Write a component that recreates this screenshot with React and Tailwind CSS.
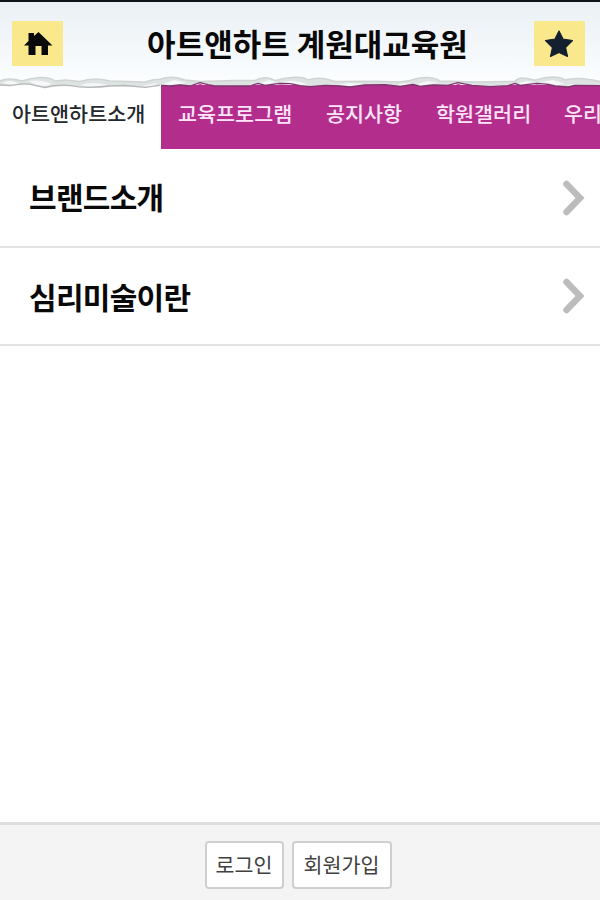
const tabs = [
  { label: '교육프로그램', width: 'w-[148px]' },
  { label: '공지사항', width: 'w-[110px]' },
  { label: '학원갤러리', width: 'w-[128px]' },
  { label: '우리', width: 'w-[148px]' },
];

function HomeIcon() {
  return (
    <svg width="30" height="26" viewBox="0 0 30 26" fill="#080b09">
      <path d="M1 14.500 5.500 10V2h5.500v3L15.500 1 29.500 14.500H25V24h-6.500v-9H12.500v9H5.500v-9.500Z" />
    </svg>
  );
}

function StarIcon() {
  return (
    <svg width="30" height="28" viewBox="0 0 30 28" fill="#142030" stroke="#142030" strokeWidth="1.2" strokeLinejoin="round">
      <path d="m14 1 4 8 9.500 1.500-7 7 2 9L14 22.500l-8.500 4 2-9-7-7L10 9Z" />
    </svg>
  );
}

const ridge = 'M0 5.700Q5 4 10 4T22 6Q30 3 40 2.500T55 6L65 5 80 6.500Q88 4 95 4T110 6L145 7Q152 4.500 160 4.300 166 2 172 2.300T185 5L200 6.500 235 5.500 255 5.500Q260 3 265 2.700T275 5.700Q285 2.500 295 2.300T308 5Q314 3 320 3.300T335 6.500L375 6.300 400 7 410 5.500Q420 2 428 2.500T440 6L475 7 515 6.300Q518 3 522 3T535 5.300Q545 2 553 2T565 5Q572 3 580 3.500T600 6.500';
const lower = 'L600 10.700 575 10.300 568 12 555 11 548 9.300 537 8.300 520 10.300 515 8.300 508 10.700 490 11.700 472 10.300 458 7.700 448 10.300 433 10 420 11.300 413 9.500 400 11.500 385 9.700 365 10 350 12 340 11 325 10.300 310 11.700 300 10.700 290 8.700 280 8.300 265 10.300 258 8.300 250 11 215 11 208 9.700 200 7.700 190 11 180 10 170 11 160 10.300 145 12.300 110 11 90 12.300 70 10.700 45 12.700 30 9.300 10 10.700 0 10Z';

function TornEdge() {
  return (
    <svg className="pointer-events-none absolute left-0 top-[75px] z-10" width="600" height="15" viewBox="0 0 600 15">
      <path fill="#dde3e2" d={ridge + lower} />
      <path fill="none" stroke="#d0d5d4" strokeWidth="1.5" d={ridge} />
      <path fill="#f5f7f8" d="M2 8Q9 4 18 8T2 8M29 6Q42 4 52 9 45 13 34 9ZM80 10Q92 6 108 10 93 13 80 10M141 11 157 8 153 12ZM163 9 174 5 187 8 180 9 171 10ZM190 10 198 8 198 10ZM260 8 269 5 276 7 266 10ZM281 7Q296 4 308 10L301 10 291 8ZM336 10 349 8 364 9 351 11ZM417 9 428 6 438 8 421 10ZM398 9 412 8 401 11ZM519 8 527 6 534 7 521 10ZM540 7 553 5 565 9 557 10 548 8ZM567 10 576 9 570 11Z" />
      <path fill="none" stroke="#b5b9b7" strokeWidth="1.300" strokeLinejoin="round" d="M0 10 10 10.700Q23 8 30 9.300T45 12.500Q58 9 70 10.700 80 12.500 90 12.300T110 11L125 10.500 145 12.300 160 10.300" />
      <path fill="none" stroke="#7f346c" strokeWidth="1.300" strokeLinejoin="round" d="M161 10.300 170 11 180 10 190 11 200 7.700 208 9.700 215 11 250 11 258 8.300 265 10.300 280 8.300 290 8.700 300 10.700 310 11.700 325 10.300 340 11 350 12 365 10 385 9.700 400 11.500 413 9.500 420 11.300 433 10 448 10.300 458 7.700 472 10.300 490 11.700 508 10.700 515 8.300 520 10.300 537 8.300 548 9.300 555 11 568 12 575 10.300 600 10.700" />
      <path fill="#b32d8c" d="M193 12 200 9 207 11 212 12ZM252 12 258 9.500 264 12ZM268 12 280 9.500 290 10 298 12ZM450 12 458 9 469 12ZM510 12 515 9.500 519 12ZM524 12 537 9.500 548 10.500 553 12Z" />
    </svg>
  );
}

function MenuItem({ label, height, shift }) {
  return (
    <a className={`flex ${height} items-center justify-between border-b-2 border-[#e3e3e3] pl-[29px] pr-[15px]`}>
      <span className={`text-[30px] font-bold leading-none tracking-[-0.7px] ${shift}`}>{label}</span>
      <svg width="23" height="36" viewBox="0 0 23 36" fill="none" stroke="#bcbcbc" strokeWidth="6.500" strokeLinecap="round" strokeLinejoin="miter">
        <path d="m4.500 4 13.500 14-13.500 14" />
      </svg>
    </a>
  );
}

export default function App() {
  return (
    <div className="flex h-[900px] w-[600px] flex-col overflow-hidden bg-white font-['Noto_Sans_CJK_KR',sans-serif] text-[#090909]">
      <div className="relative shrink-0">
        <header className="flex h-[85px] items-start border-t-2 border-[#11131a] bg-linear-to-b from-[#eaf0f5] to-[#fcfeff] pl-[12px] pr-[15px] pt-[19px]">
          <a className="flex h-[45px] w-[51px] shrink-0 items-center justify-center bg-[#fae98c]"><HomeIcon /></a>
          <h1 className="mt-[6px] flex-1 whitespace-nowrap pl-[18px] text-center text-[31px] font-bold leading-[32px]">아트앤하트 계원대교육원</h1>
          <a className="flex h-[45px] w-[51px] shrink-0 items-center justify-center bg-[#fae98c]"><StarIcon /></a>
        </header>
        <nav className="flex h-[64px] overflow-hidden whitespace-nowrap bg-[#b32d8c] text-[20.700px] leading-[57px]">
          <a className="w-[161px] shrink-0 bg-white pl-[12px] font-medium text-[#24272c]">아트앤하트소개</a>
          <div className="flex shrink-0 pl-[17px] font-medium text-[#ffe5fa]">
            {tabs.map((tab) => (
              <a key={tab.label} className={`${tab.width} shrink-0`}>{tab.label}</a>
            ))}
          </div>
        </nav>
        <TornEdge />
      </div>
      <main className="flex-1">
        <MenuItem label="브랜드소개" height="h-[99px]" shift="mb-[4px]" />
        <MenuItem label="심리미술이란" height="h-[98px]" shift="mb-0" />
      </main>
      <footer className="flex h-[78px] shrink-0 items-start justify-center gap-[8px] border-t-3 border-[#dedede] bg-[#f4f4f4] pr-[4px] pt-[16px] text-[20.600px] text-[#414141]">
        <button className="h-[48px] w-[79px] rounded-[4px] border-2 border-[#cfcfcf] bg-white pb-[2px] leading-none">로그인</button>
        <button className="h-[48px] w-[100px] rounded-[4px] border-2 border-[#cfcfcf] bg-white pb-[2px] leading-none">회원가입</button>
      </footer>
    </div>
  );
}
